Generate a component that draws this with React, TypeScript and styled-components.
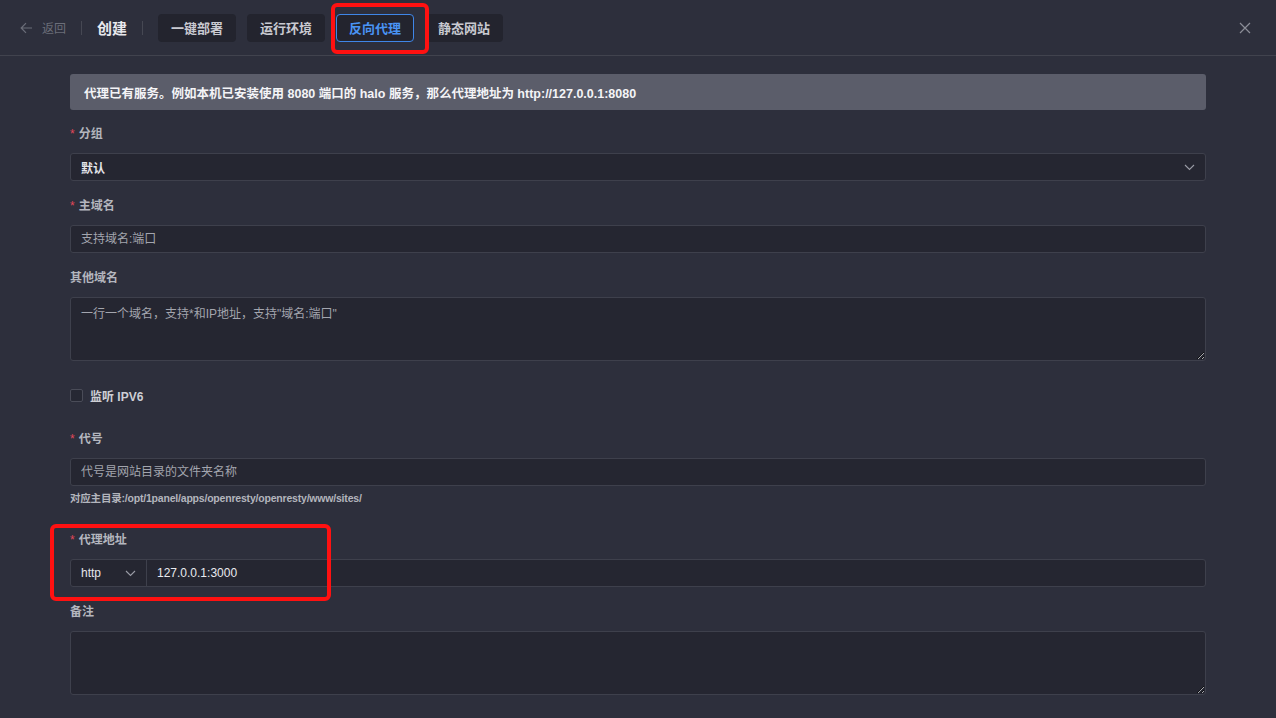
import React from 'react';
import styled, { createGlobalStyle } from 'styled-components';

const GlobalStyle = createGlobalStyle`
    html, body {
        margin: 0;
        padding: 0;
        background: #2d2f3c;
        font-family: "Liberation Sans", "Noto Sans CJK SC", sans-serif;
    }
    * {
        box-sizing: border-box;
    }
`;

const Page = styled.div`
    position: relative;
    width: 1276px;
    height: 718px;
    overflow: hidden;
    background: #2d2f3c;
`;

const Header = styled.div`
    display: flex;
    align-items: center;
    height: 56px;
    padding: 0 20px;
    border-bottom: 1px solid #41434e;
`;

const BackLink = styled.div`
    display: flex;
    align-items: center;
    gap: 9px;
    color: #6b6e79;
    font-size: 12px;
`;

const Divider = styled.span`
    width: 1px;
    height: 14px;
    margin: 0 15px;
    background: #464853;
`;

const Title = styled.span`
    color: #e8e9ee;
    font-size: 15px;
    font-weight: bold;
`;

const Tabs = styled.div`
    display: flex;
    gap: 11px;
`;

const Tab = styled.button<{ $active?: boolean }>`
    height: 28px;
    padding: 0 12px;
    border-radius: 4px;
    border: 1px solid ${(p) => (p.$active ? '#3f86e8' : 'transparent')};
    background: #23242e;
    color: ${(p) => (p.$active ? '#4a94f5' : '#c9cad1')};
    font-family: inherit;
    font-size: 13px;
    font-weight: bold;
    cursor: pointer;
`;

const CloseButton = styled.div`
    margin-left: auto;
    display: flex;
    color: #8b8d97;
    margin-right: 5px;
`;

const Content = styled.div`
    padding: 18px 70px 0;
`;

const Alert = styled.div`
    height: 36px;
    display: flex;
    align-items: center;
    padding: 0 14px;
    border-radius: 3px;
    background: #5b5d6a;
    color: #f4f4f7;
    font-size: 12.5px;
    font-weight: bold;
    margin-bottom: 14px;
`;

const FormItem = styled.div<{ $gap?: number }>`
    margin-bottom: ${(p) => p.$gap ?? 15}px;
`;

const Label = styled.div<{ $required?: boolean }>`
    height: 20px;
    line-height: 20px;
    margin-bottom: 9px;
    color: #b4b6be;
    font-size: 12px;
    font-weight: bold;

    ${(p) =>
        p.$required &&
        `&::before {
            content: '*';
            color: #e0475a;
            margin-right: 4px;
            font-weight: normal;
        }`}
`;

const Box = styled.div`
    height: 28px;
    display: flex;
    align-items: center;
    padding: 0 10px;
    border: 1px solid #3e404c;
    border-radius: 3px;
    background: #252631;
    color: #e4e5ea;
    font-size: 12px;
`;

const SelectBox = styled(Box)`
    justify-content: space-between;
    font-weight: bold;
    padding-right: 10px;
`;

const Input = styled.input`
    width: 100%;
    height: 28px;
    padding: 0 10px;
    border: 1px solid #3e404c;
    border-radius: 3px;
    background: #252631;
    color: #e4e5ea;
    font-family: inherit;
    font-size: 12px;
    outline: none;

    &::placeholder {
        color: #a3a5ae;
    }
`;

const TextArea = styled.textarea`
    display: block;
    width: 100%;
    height: 64px;
    padding: 6px 10px;
    border: 1px solid #3e404c;
    border-radius: 3px;
    background: #252631;
    color: #e4e5ea;
    font-family: inherit;
    font-size: 12px;
    outline: none;

    &::placeholder {
        color: #a3a5ae;
    }
`;

const CheckRow = styled.label`
    display: flex;
    align-items: center;
    gap: 7px;
    height: 28px;
    margin: 20px 0;
    color: #cdced5;
    font-size: 12px;
    font-weight: bold;
`;

const CheckBox = styled.span`
    width: 13px;
    height: 13px;
    border: 1px solid #4a4c58;
    border-radius: 2px;
    background: #262833;
`;

const Help = styled.div`
    margin-top: 5px;
    line-height: 15px;
    color: #b3b5bd;
    font-size: 10.5px;
    font-weight: bold;
    letter-spacing: -0.2px;
`;

const InputGroup = styled.div`
    display: flex;
    height: 28px;
    border: 1px solid #3e404c;
    border-radius: 3px;
    background: #252631;
`;

const GroupSelect = styled.div`
    width: 76px;
    display: flex;
    align-items: center;
    justify-content: space-between;
    padding: 0 10px;
    border-right: 1px solid #3e404c;
    color: #e4e5ea;
    font-size: 12px;
`;

const GroupValue = styled.div`
    display: flex;
    align-items: center;
    padding: 0 10px;
    color: #e9eaef;
    font-size: 12px;
`;

const Highlight = styled.div<{ $x: number; $y: number; $w: number; $h: number }>`
    position: absolute;
    left: ${(p) => p.$x}px;
    top: ${(p) => p.$y}px;
    width: ${(p) => p.$w}px;
    height: ${(p) => p.$h}px;
    border: 4px solid #ff1111;
    border-radius: 6px;
    pointer-events: none;
`;

const Chevron = ({ color = '#9a9ca6' }: { color?: string }) => (
    <svg width="11" height="7" viewBox="0 0 11 7" fill="none">
        <path d="M1 1l4.5 4.5L10 1" stroke={color} strokeWidth="1.1" />
    </svg>
);

const App: React.FC = () => {
    return (
        <Page>
            <GlobalStyle />
            <Header>
                <BackLink>
                    <svg width="13" height="12" viewBox="0 0 13 12" fill="none">
                        <path d="M12 6H1.5M6 1.2L1.2 6 6 10.8" stroke="#6b6e79" strokeWidth="1.2" />
                    </svg>
                    <span>返回</span>
                </BackLink>
                <Divider />
                <Title>创建</Title>
                <Divider />
                <Tabs>
                    <Tab>一键部署</Tab>
                    <Tab>运行环境</Tab>
                    <Tab $active>反向代理</Tab>
                    <Tab>静态网站</Tab>
                </Tabs>
                <CloseButton>
                    <svg width="12" height="12" viewBox="0 0 12 12" fill="none">
                        <path d="M1 1l10 10M11 1L1 11" stroke="#8b8d97" strokeWidth="1.2" />
                    </svg>
                </CloseButton>
            </Header>

            <Content>
                <Alert>代理已有服务。例如本机已安装使用 8080 端口的 halo 服务，那么代理地址为 http://127.0.0.1:8080</Alert>

                <FormItem>
                    <Label $required>分组</Label>
                    <SelectBox>
                        <span>默认</span>
                        <Chevron />
                    </SelectBox>
                </FormItem>

                <FormItem>
                    <Label $required>主域名</Label>
                    <Input placeholder="支持域名:端口" />
                </FormItem>

                <FormItem $gap={0}>
                    <Label>其他域名</Label>
                    <TextArea placeholder={'一行一个域名，支持*和IP地址，支持"域名:端口"'} />
                </FormItem>

                <CheckRow>
                    <CheckBox />
                    <span>监听 IPV6</span>
                </CheckRow>

                <FormItem $gap={24}>
                    <Label $required>代号</Label>
                    <Input placeholder="代号是网站目录的文件夹名称" />
                    <Help>对应主目录:/opt/1panel/apps/openresty/openresty/www/sites/</Help>
                </FormItem>

                <FormItem>
                    <Label $required>代理地址</Label>
                    <InputGroup>
                        <GroupSelect>
                            <span>http</span>
                            <Chevron />
                        </GroupSelect>
                        <GroupValue>127.0.0.1:3000</GroupValue>
                    </InputGroup>
                </FormItem>

                <FormItem>
                    <Label>备注</Label>
                    <TextArea />
                </FormItem>
            </Content>

            <Highlight $x={331} $y={3} $w={98} $h={51} />
            <Highlight $x={50} $y={524} $w={281} $h={77} />
        </Page>
    );
};

export default App;
